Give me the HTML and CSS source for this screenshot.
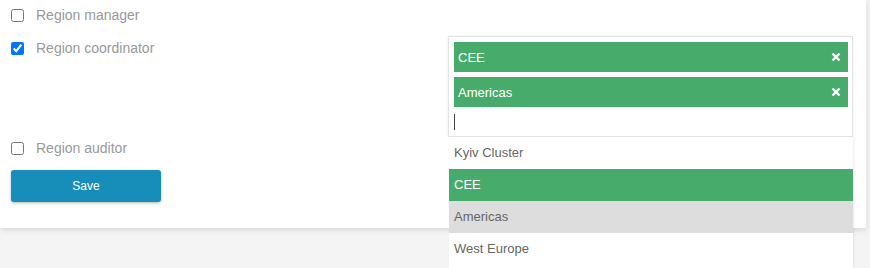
FILE: index.html
```html
<!DOCTYPE html>
<html lang="en">
<head>
    <meta charset="UTF-8">
    <meta name="viewport" content="width=device-width, initial-scale=1.0">
    <title>Roles</title>
    <link rel="stylesheet" href="styles.css">
</head>
<body>
    <div class="card">
        <div class="role-row first">
            <label class="role"><input type="checkbox"> <span>Region manager</span></label>
        </div>

        <div class="role-row with-select">
            <label class="role"><input type="checkbox" checked> <span>Region coordinator</span></label>

            <div class="multiselect">
                <div class="tag">CEE <svg class="remove" width="10" height="10" viewBox="0 0 10 10"><path d="M1.5 1.5L8.5 8.5M8.5 1.5L1.5 8.5"/></svg></div>
                <div class="tag">Americas <svg class="remove" width="10" height="10" viewBox="0 0 10 10"><path d="M1.5 1.5L8.5 8.5M8.5 1.5L1.5 8.5"/></svg></div>
                <div class="search"><span class="caret"></span></div>

                <ul class="options">
                    <li>Kyiv Cluster</li>
                    <li class="selected">CEE</li>
                    <li class="hover">Americas</li>
                    <li>West Europe</li>
                </ul>
            </div>
        </div>

        <div class="role-row">
            <label class="role"><input type="checkbox"> <span>Region auditor</span></label>
        </div>

        <button class="save">Save</button>
    </div>
</body>
</html>
```

FILE: styles.css
```css
html {
    background-color: #f4f4f4;
}
body {
    margin: 0;
    min-height: 268px;
    font-family: "Liberation Sans", Arial, sans-serif;
}
.card {
    position: relative;
    width: 866px;
    height: 228px;
    box-sizing: border-box;
    background-color: #fff;
    padding: 5px 0 0 11px;
    box-shadow: 0 2px 6px rgba(0, 0, 0, 0.12);
}
.role-row {
    display: flex;
    align-items: flex-start;
    margin-top: 1px;
}
.role-row.first {
    margin-top: 0;
}
.role-row.with-select {
    margin-top: 11px;
}
.role {
    display: flex;
    align-items: center;
    height: 20px;
    width: 437px;
    font-size: 14px;
    color: #999;
}
.with-select .role {
    margin-top: 2px;
}
.role input {
    margin: 0 12px 0 0;
    width: 13px;
    height: 13px;
}
.multiselect {
    position: relative;
    z-index: 2;
    width: 405px;
    box-sizing: border-box;
    border: 1px solid #e3e3e3;
    border-bottom: 1px solid #e6e6e6;
    padding: 5px 4px 0 5px;
    background-color: #fff;
    box-shadow: 0 0 3px rgba(0, 0, 0, 0.08);
}
.tag {
    display: flex;
    align-items: center;
    justify-content: space-between;
    height: 30px;
    margin-bottom: 5px;
    padding: 0 7px 0 4px;
    background-color: #47ab6b;
    color: #fff;
    font-size: 13px;
}
.remove path {
    stroke: #fff;
    stroke-width: 2.4;
    fill: none;
}
.search {
    height: 29px;
    display: flex;
    align-items: center;
    margin-top: -5px;
}
.caret {
    display: block;
    width: 1px;
    height: 16px;
    background-color: #444;
    margin-top: 1px;
}
.options {
    position: absolute;
    z-index: 3;
    top: 100%;
    left: 0;
    width: 404px;
    height: 131px;
    margin: 1px 0 0;
    padding: 0;
    list-style: none;
    background-color: #fff;
    box-shadow: 1px 0 2px rgba(0, 0, 0, 0.08);
}
.options li {
    height: 32px;
    line-height: 32px;
    padding-left: 5px;
    font-size: 13px;
    color: #666;
}
.options li.selected {
    background-color: #47ab6b;
    color: #fff;
}
.options li.hover {
    background-color: #ddd;
}
.save {
    display: block;
    margin-top: 12px;
    width: 150px;
    height: 32px;
    border: none;
    border-radius: 3px;
    background-color: #168eb9;
    color: #fff;
    font-family: "Liberation Sans", Arial, sans-serif;
    font-size: 12px;
    box-shadow: 0 1px 3px rgba(0, 0, 0, 0.3);
}
```
